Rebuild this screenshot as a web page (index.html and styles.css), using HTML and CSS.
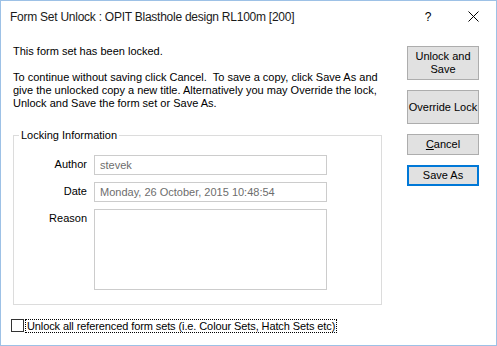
FILE: index.html
```html
<!DOCTYPE html>
<html lang="en">
<head>
  <meta charset="UTF-8">
  <title>Form Set Unlock</title>
  <link rel="stylesheet" href="styles.css">
</head>
<body>
  <div class="window">
    <div class="titlebar">
      <span class="title">Form Set Unlock : OPIT Blasthole design RL100m [200]</span>
      <span class="help">?</span>
      <span class="close">
        <svg width="11" height="11" viewBox="0 0 11 11"><path d="M0.5 0.5 L10.5 10.5 M10.5 0.5 L0.5 10.5" stroke="#000" stroke-width="1" fill="none"/></svg>
      </span>
    </div>

    <div class="body">
      <div class="main">
        <p class="msg">This form set has been locked.</p>
        <p class="msg">To continue without saving click Cancel.&nbsp; To save a copy, click Save As and give the unlocked copy a new title. Alternatively you may Override the lock, Unlock and Save the form set or Save As.</p>

        <fieldset class="group">
          <legend>Locking Information</legend>
          <div class="fields">
            <label>Author</label>
            <div class="input">stevek</div>
            <label>Date</label>
            <div class="input">Monday, 26 October, 2015 10:48:54</div>
            <label>Reason</label>
            <div class="input area"></div>
          </div>
        </fieldset>

        <div class="check-row">
          <span class="checkbox"></span>
          <span class="check-label">Unlock all referenced form sets (i.e. Colour Sets, Hatch Sets etc)</span>
        </div>
      </div>

      <div class="buttons">
        <button class="btn tall">Unlock and<br>Save</button>
        <button class="btn tall">Override Lock</button>
        <button class="btn"><u>C</u>ancel</button>
        <button class="btn default">Save As</button>
      </div>
    </div>
  </div>
</body>
</html>
```

FILE: styles.css
```css
body {
  margin: 0;
  font-family: "Liberation Sans", Arial, sans-serif;
  font-size: 11px;
  color: #000;
}

.window {
  width: 497px;
  height: 346px;
  box-sizing: border-box;
  border: 1px solid #9dc1e6;
  background: #fff;
}

.titlebar {
  display: flex;
  align-items: center;
  height: 31px;
  padding-left: 9px;
}

.title {
  flex: 1;
  font-size: 12px;
  letter-spacing: -0.25px;
  color: #1a1a1a;
}

.help {
  font-size: 12px;
  width: 44px;
  text-align: center;
}

.close {
  width: 46px;
  display: flex;
  justify-content: center;
}

.body {
  display: flex;
  padding-top: 13px;
}

.main {
  width: 369px;
  padding-left: 12px;
}

.msg {
  margin: 0 0 13px;
  line-height: 13px;
}

.group {
  margin: 19px 0 0;
  padding: 13px 0 0 0;
  border: 1px solid #dcdcdc;
  height: 176px;
  box-sizing: border-box;
}

.group legend {
  padding: 0 2px;
  margin-left: 5px;
  line-height: 13px;
}

.fields {
  display: grid;
  grid-template-columns: 73px 233px;
  column-gap: 7px;
  row-gap: 7px;
}

.fields label {
  text-align: right;
  padding-top: 3px;
}

.input {
  height: 20px;
  box-sizing: border-box;
  border: 1px solid #cccccc;
  color: #6d6d6d;
  padding: 3px 0 0 5px;
}

.input.area {
  height: 81px;
}

.check-row {
  display: flex;
  align-items: center;
  margin-top: 14px;
  margin-left: -2px;
}

.checkbox {
  width: 13px;
  height: 13px;
  box-sizing: border-box;
  border: 1px solid #333;
  margin-right: 2px;
}

.check-label {
  outline: 1px dotted #000;
  padding: 0 1px;
  letter-spacing: -0.1px;
}

.buttons {
  display: flex;
  flex-direction: column;
  gap: 10px;
  margin-left: 25px;
  margin-top: 1px;
}

.btn {
  width: 72px;
  height: 21px;
  font-family: inherit;
  font-size: 11px;
  background: #e1e1e1;
  border: 1px solid #adadad;
  padding: 0;
  color: #000;
  line-height: 13px;
}

.btn.tall {
  height: 34px;
}

.btn.default {
  border: 2px solid #0078d7;
}
```
